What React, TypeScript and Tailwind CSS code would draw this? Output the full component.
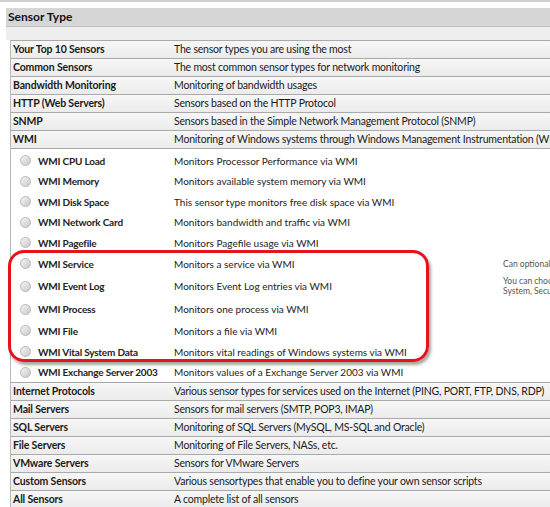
import React from 'react';

type Row = { name: string; desc: string };

const topRows: Row[] = [
  { name: 'Your Top 10 Sensors', desc: 'The sensor types you are using the most' },
  { name: 'Common Sensors', desc: 'The most common sensor types for network monitoring' },
  { name: 'Bandwidth Monitoring', desc: 'Monitoring of bandwidth usages' },
  { name: 'HTTP (Web Servers)', desc: 'Sensors based on the HTTP Protocol' },
  { name: 'SNMP', desc: 'Sensors based in the Simple Network Management Protocol (SNMP)' },
  { name: 'WMI', desc: 'Monitoring of Windows systems through Windows Management Instrumentation (WMI)' },
];

type SubRow = { name: string; desc: string; h: string; note?: React.ReactNode };

const wmiRows: SubRow[] = [
  { name: 'WMI CPU Load', desc: 'Monitors Processor Performance via WMI', h: 'h-[21px]' },
  { name: 'WMI Memory', desc: 'Monitors available system memory via WMI', h: 'h-[20px]' },
  { name: 'WMI Disk Space', desc: 'This sensor type monitors free disk space via WMI', h: 'h-[21px]' },
  { name: 'WMI Network Card', desc: 'Monitors bandwidth and traffic via WMI', h: 'h-[20px]' },
  { name: 'WMI Pagefile', desc: 'Monitors Pagefile usage via WMI', h: 'h-[21px]' },
  { name: 'WMI Service', desc: 'Monitors a service via WMI', h: 'h-[21px]', note: <span>Can optionally restart the service</span> },
  {
    name: 'WMI Event Log',
    desc: 'Monitors Event Log entries via WMI',
    h: 'h-[24px]',
    note: (
      <span>
        You can choose Application,
        <br />
        System, Security logs
      </span>
    ),
  },
  { name: 'WMI Process', desc: 'Monitors one process via WMI', h: 'h-[22px]' },
  { name: 'WMI File', desc: 'Monitors a file via WMI', h: 'h-[21px]' },
  { name: 'WMI Vital System Data', desc: 'Monitors vital readings of Windows systems via WMI', h: 'h-[21px]' },
  { name: 'WMI Exchange Server 2003', desc: 'Monitors values of a Exchange Server 2003 via WMI', h: 'h-[20px]' },
];

const bottomRows: Row[] = [
  { name: 'Internet Protocols', desc: 'Various sensor types for services used on the Internet (PING, PORT, FTP, DNS, RDP)' },
  { name: 'Mail Servers', desc: 'Sensors for mail servers (SMTP, POP3, IMAP)' },
  { name: 'SQL Servers', desc: 'Monitoring of SQL Servers (MySQL, MS-SQL and Oracle)' },
  { name: 'File Servers', desc: 'Monitoring of File Servers, NASs, etc.' },
  { name: 'VMware Servers', desc: 'Sensors for VMware Servers' },
  { name: 'Custom Sensors', desc: 'Various sensortypes that enable you to define your own sensor scripts' },
  { name: 'All Sensors', desc: 'A complete list of all sensors' },
];

const font = { fontFamily: 'Lato, "Noto Sans", sans-serif' };

function GroupRow({ row }: { row: Row }) {
  return (
    <div className="flex h-[18px] items-center whitespace-nowrap border-b border-[#a9a9a9] bg-gradient-to-b from-[#f7f7f7] to-[#ebebeb] text-[10.5px] leading-none text-[#1a1a1a]">
      <div className="w-[163px] shrink-0 pl-[2px] font-bold tracking-[-0.15px]">{row.name}</div>
      <div className="tracking-[-0.2px]">{row.desc}</div>
    </div>
  );
}

function Radio() {
  return (
    <span className="block h-[11px] w-[11px] rounded-full border border-[#b8b8b8] bg-gradient-to-br from-[#f4f4f4] to-[#c9c9c9]" />
  );
}

export default function App() {
  return (
    <div className="relative h-[507px] w-[550px] overflow-hidden bg-white" style={font}>
      <div className="h-[2px] bg-[#cfcfcf]" />
      <div className="ml-[6px] mt-[6px]">
        <div className="flex h-[19px] items-center border-b border-[#bdbdbd] bg-[#d6d6d6] pl-[2px] text-[12px] font-bold text-[#111]">
          Sensor Type
        </div>
        <div className="h-[13px] bg-[#eeeeee]" />
      </div>

      <div className="ml-[10px] border-l border-[#b9b9b9]">
        <div className="border-t border-[#a9a9a9]">
          {topRows.map((r) => (
            <GroupRow key={r.name} row={r} />
          ))}
        </div>

        <div className="bg-white pt-[1px]">
          {wmiRows.map((r) => (
            <div key={r.name} className={`flex items-center whitespace-nowrap text-[10px] leading-none text-[#222] ${r.h}`}>
              <div className="flex w-[27px] shrink-0 justify-center pl-[1px]">
                <Radio />
              </div>
              <div className="w-[136px] shrink-0 font-bold tracking-[-0.2px]">{r.name}</div>
              <div className="w-[329px] shrink-0">{r.desc}</div>
              {r.note && <div className="text-[8.5px] leading-[10px] text-[#555]">{r.note}</div>}
            </div>
          ))}
        </div>

        <div className="border-t border-[#a9a9a9]">
          {bottomRows.map((r) => (
            <GroupRow key={r.name} row={r} />
          ))}
        </div>
      </div>

      {/* red highlight annotation */}
      <div className="pointer-events-none absolute left-[8px] top-[250px] h-[112px] w-[421px] rounded-[16px] border-[3px] border-[#e8121a] shadow-[2px_3px_3px_rgba(0,0,0,0.35)]" />
    </div>
  );
}
